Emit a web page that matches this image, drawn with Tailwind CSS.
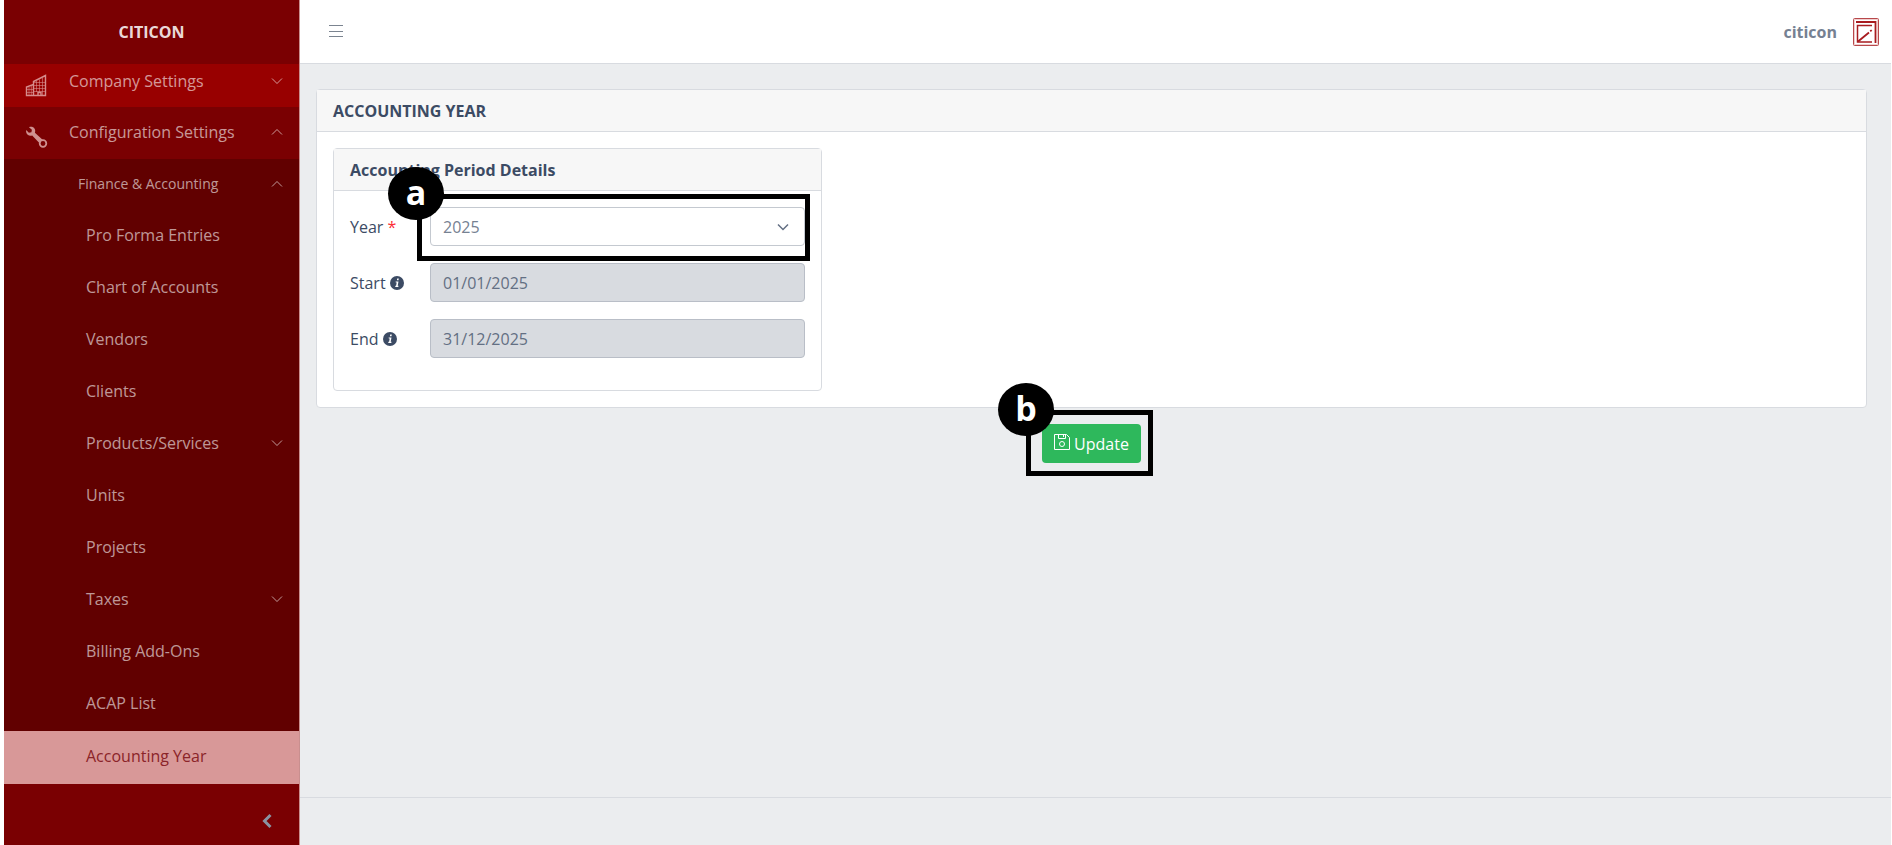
<!DOCTYPE html>
<html lang="en">
<head>
    <meta charset="UTF-8">
    <meta name="viewport" content="width=device-width, initial-scale=1.0">
    <title>CITICON - Accounting Year</title>
    <script src="https://cdn.jsdelivr.net/npm/@tailwindcss/browser@4"></script>
</head>
<body class="bg-white pl-1 pr-px font-['Open_Sans','Noto_Sans',sans-serif] text-base leading-6 text-[#3c4b64]">
    <!-- Shared icons -->
    <svg class="hidden" xmlns="http://www.w3.org/2000/svg">
        <symbol id="chevron-down" viewBox="0 0 12 12">
            <path d="M1 3.5l5 5 5-5" fill="none" stroke="currentColor" />
        </symbol>
        <symbol id="chevron-up" viewBox="0 0 12 12">
            <path d="M1 8.5l5-5 5 5" fill="none" stroke="currentColor" />
        </symbol>
        <symbol id="info" viewBox="0 0 14 14">
            <circle cx="7" cy="7" r="7" fill="currentColor" />
            <path d="M7.2 2.6h1.6l-.3 1.6H6.9zM5.6 5.4h2.9l-.8 4.4h.8l-.2 1.2H5.2l.2-1.2h.7l.6-3.2h-.9z" fill="#fff" />
        </symbol>
    </svg>

    <div class="flex min-h-screen">
        <!-- Sidebar -->
        <aside class="flex w-[296px] shrink-0 flex-col border-r border-[#c98f8f] bg-[#7a0002] text-white/60">
            <div class="flex h-16 items-center justify-center font-bold text-white/87">CITICON</div>

            <nav class="flex flex-col">
                <a href="#" class="flex h-[43px] items-center bg-[#980000] pr-4 pb-2.5 pl-5">
                    <svg class="mt-2.5 h-6 w-6 text-[#d68c8c]" viewBox="0 0 24 24" fill="none" stroke="currentColor">
                        <path d="M2.5 21.5V13l7-2.500V7.500l12-6v20zM9.500 10.500v11" stroke-width="1.4" />
                        <path d="M12.500 7v11M15.500 5.500V18M18.500 4v17M10 8.500h11M10 11.500h11M10 14.500h11M10 17.500h11M5 13v8M7.300 12v9M3 15.500h6M3 18.500h6" stroke-width=".6" />
                        <path d="M14 21.500v-3h3v3" stroke-width="1.4" />
                    </svg>
                    <span class="ml-[21px] flex-1">Company Settings</span>
                    <svg class="h-3 w-3"><use href="#chevron-down" /></svg>
                </a>
                <a href="#" class="flex h-[52px] items-center pr-4 pb-0.5 pl-5">
                    <svg class="mt-2.5 h-6 w-6 text-[#cf9090]" viewBox="0 0 24 24">
                        <path d="M5 2.2c2-.8 4.500-.3 5.600 1.600.8 1.400.7 2.800.3 4l8.300 7.400-3.400 3.400-7.600-8.200c-1.600.6-3.200.4-4.500-.7C2.300 8.600 1.800 6.800 2.200 5l2.700 2.700 2.500-.5.5-2.400z" fill="currentColor" />
                        <circle cx="19" cy="18.500" r="3.300" fill="#7a0002" stroke="currentColor" stroke-width="1.800" />
                    </svg>
                    <span class="ml-[21px] flex-1">Configuration Settings</span>
                    <svg class="h-3 w-3"><use href="#chevron-up" /></svg>
                </a>

                <div class="flex flex-col bg-[#610000]">
                    <a href="#" class="flex h-[52px] items-center justify-between pr-4 pb-0.5 pl-[74px] text-sm">Finance &amp; Accounting
                        <svg class="h-3 w-3"><use href="#chevron-up" /></svg>
                    </a>
                    <a href="#" class="flex h-[52px] items-center pb-1 pl-[82px]">Pro Forma Entries</a>
                    <a href="#" class="flex h-[52px] items-center pb-1 pl-[82px]">Chart of Accounts</a>
                    <a href="#" class="flex h-[52px] items-center pb-1 pl-[82px]">Vendors</a>
                    <a href="#" class="flex h-[52px] items-center pb-1 pl-[82px]">Clients</a>
                    <a href="#" class="flex h-[52px] items-center justify-between pr-4 pb-1 pl-[82px]">Products/Services
                        <svg class="h-3 w-3"><use href="#chevron-down" /></svg>
                    </a>
                    <a href="#" class="flex h-[52px] items-center pb-1 pl-[82px]">Units</a>
                    <a href="#" class="flex h-[52px] items-center pb-1 pl-[82px]">Projects</a>
                    <a href="#" class="flex h-[52px] items-center justify-between pr-4 pb-1 pl-[82px]">Taxes
                        <svg class="h-3 w-3"><use href="#chevron-down" /></svg>
                    </a>
                    <a href="#" class="flex h-[52px] items-center pb-1 pl-[82px]">Billing Add-Ons</a>
                    <a href="#" class="flex h-[52px] items-center pb-1 pl-[82px]">ACAP List</a>
                    <a href="#" class="flex h-[53px] items-center bg-[#d89898] pb-1 pl-[82px] text-[#8b2429]">Accounting Year</a>
                </div>
            </nav>

            <button type="button" aria-label="Collapse sidebar" class="mt-auto flex h-[61px] items-center justify-end pt-3 pr-[26px] text-[#8a93a2]">
                <svg class="h-4 w-3" viewBox="0 0 12 16">
                    <path d="M9.5 2l-6 6 6 6" fill="none" stroke="currentColor" stroke-width="3" />
                </svg>
            </button>
        </aside>

        <div class="flex flex-1 flex-col bg-[#ebedef]">
            <!-- Top bar -->
            <header class="flex h-16 items-center justify-between border-b border-[#d8dbe0] bg-white pr-3 pl-7">
                <button type="button" aria-label="Toggle menu" class="text-[#7b8490]">
                    <svg class="h-4 w-4" viewBox="0 0 16 16">
                        <path d="M1 1.5h14M1 7.5h14M1 12.5h14" stroke="currentColor" />
                    </svg>
                </button>
                <a href="#" class="flex items-center gap-4 font-bold text-[#768192]">citicon
                    <svg class="h-7 w-[26px]" viewBox="0 0 26 28" fill="none" stroke="#a81c20">
                        <rect x=".5" y=".5" width="25" height="27" rx="1" stroke="#b8484b" />
                        <rect x="1.5" y="1.500" width="23" height="25" stroke="#f0cfcf" />
                        <path d="M3 4h19.500v21" stroke-width="1.800" />
                        <path d="M19 7.500H4.500V24H19" stroke-width="1.500" />
                        <path d="M5 23.500l11-9M17.200 13.300l1.500-1.200" stroke-width="1.800" />
                    </svg>
                </a>
            </header>

            <main class="flex-1 pt-[25px] pr-6 pl-4">
                <section class="rounded-sm border border-[#d8dbe0] bg-white">
                    <h1 class="flex h-[42px] items-center border-b border-[#d8dbe0] bg-[#f7f7f7] px-4 font-bold">ACCOUNTING YEAR</h1>
                    <div class="p-4">
                        <form id="period" class="w-full max-w-[489px] rounded-sm border border-[#d8dbe0]">
                            <h2 class="flex h-[42px] items-center border-b border-[#d8dbe0] bg-[#f7f7f7] px-4 font-bold">Accounting Period Details</h2>
                            <div class="flex flex-col gap-[17px] pt-4 pr-4 pb-8 pl-4">
                                <div class="flex items-center">
                                    <label for="year" class="w-20">Year <span class="text-red-500">*</span></label>
                                    <div class="relative flex-1">
                                        <select id="year" class="h-[39px] w-full appearance-none rounded-sm border border-[#c4c9d0] bg-white px-3 text-[#768192]">
                                            <option>2025</option>
                                        </select>
                                        <svg class="pointer-events-none absolute top-[14px] right-4 h-3 w-3 text-[#636f83]"><use href="#chevron-down" stroke-width="1.5" /></svg>
                                        <!-- Step a -->
                                        <div class="pointer-events-none absolute -top-[13px] -right-[5px] -bottom-[15px] -left-[13px] border-5 border-black"></div>
                                        <div class="absolute -top-10 -left-[42px] flex h-[53px] w-14 items-center justify-center rounded-[50%] bg-black pb-1 text-[34px] font-bold text-white">a</div>
                                    </div>
                                </div>
                                <div class="flex items-center">
                                    <label for="start" class="flex w-20 items-center gap-1">Start <svg class="h-[14px] w-[14px]"><use href="#info" /></svg></label>
                                    <input id="start" type="text" value="01/01/2025" readonly class="h-[39px] min-w-0 flex-1 rounded-sm border border-[#b9bec7] bg-[#d8dbe0] px-3 text-[#636f83]">
                                </div>
                                <div class="flex items-center">
                                    <label for="end" class="flex w-20 items-center gap-1">End <svg class="h-[14px] w-[14px]"><use href="#info" /></svg></label>
                                    <input id="end" type="text" value="31/12/2025" readonly class="h-[39px] min-w-0 flex-1 rounded-sm border border-[#b9bec7] bg-[#d8dbe0] px-3 text-[#636f83]">
                                </div>
                            </div>
                        </form>
                    </div>
                </section>

                <div class="mt-4 flex justify-center">
                    <div class="relative">
                        <button type="submit" form="period" class="flex h-[39px] items-center gap-1 rounded-sm bg-[#2eb85c] px-3 text-white">
                            <svg class="mb-1 h-4 w-4" viewBox="0 0 16 16" fill="none" stroke="currentColor">
                                <path d="M.5.5h12l3 3v12H.5zM4.5.5v4h7v-4M9.5 1v2" />
                                <circle cx="8" cy="10" r="2.5" />
                            </svg>
                            Update
                        </button>
                        <!-- Step b -->
                        <div class="pointer-events-none absolute -top-[14px] -right-3 -bottom-[13px] -left-4 border-5 border-black"></div>
                        <div class="absolute -top-[41px] -left-11 flex h-[53px] w-14 items-center justify-center rounded-[50%] bg-black pb-1 text-[34px] font-bold text-white">b</div>
                    </div>
                </div>
            </main>

            <footer class="h-12 border-t border-[#d8dbe0]"></footer>
        </div>
    </div>
</body>
</html>
